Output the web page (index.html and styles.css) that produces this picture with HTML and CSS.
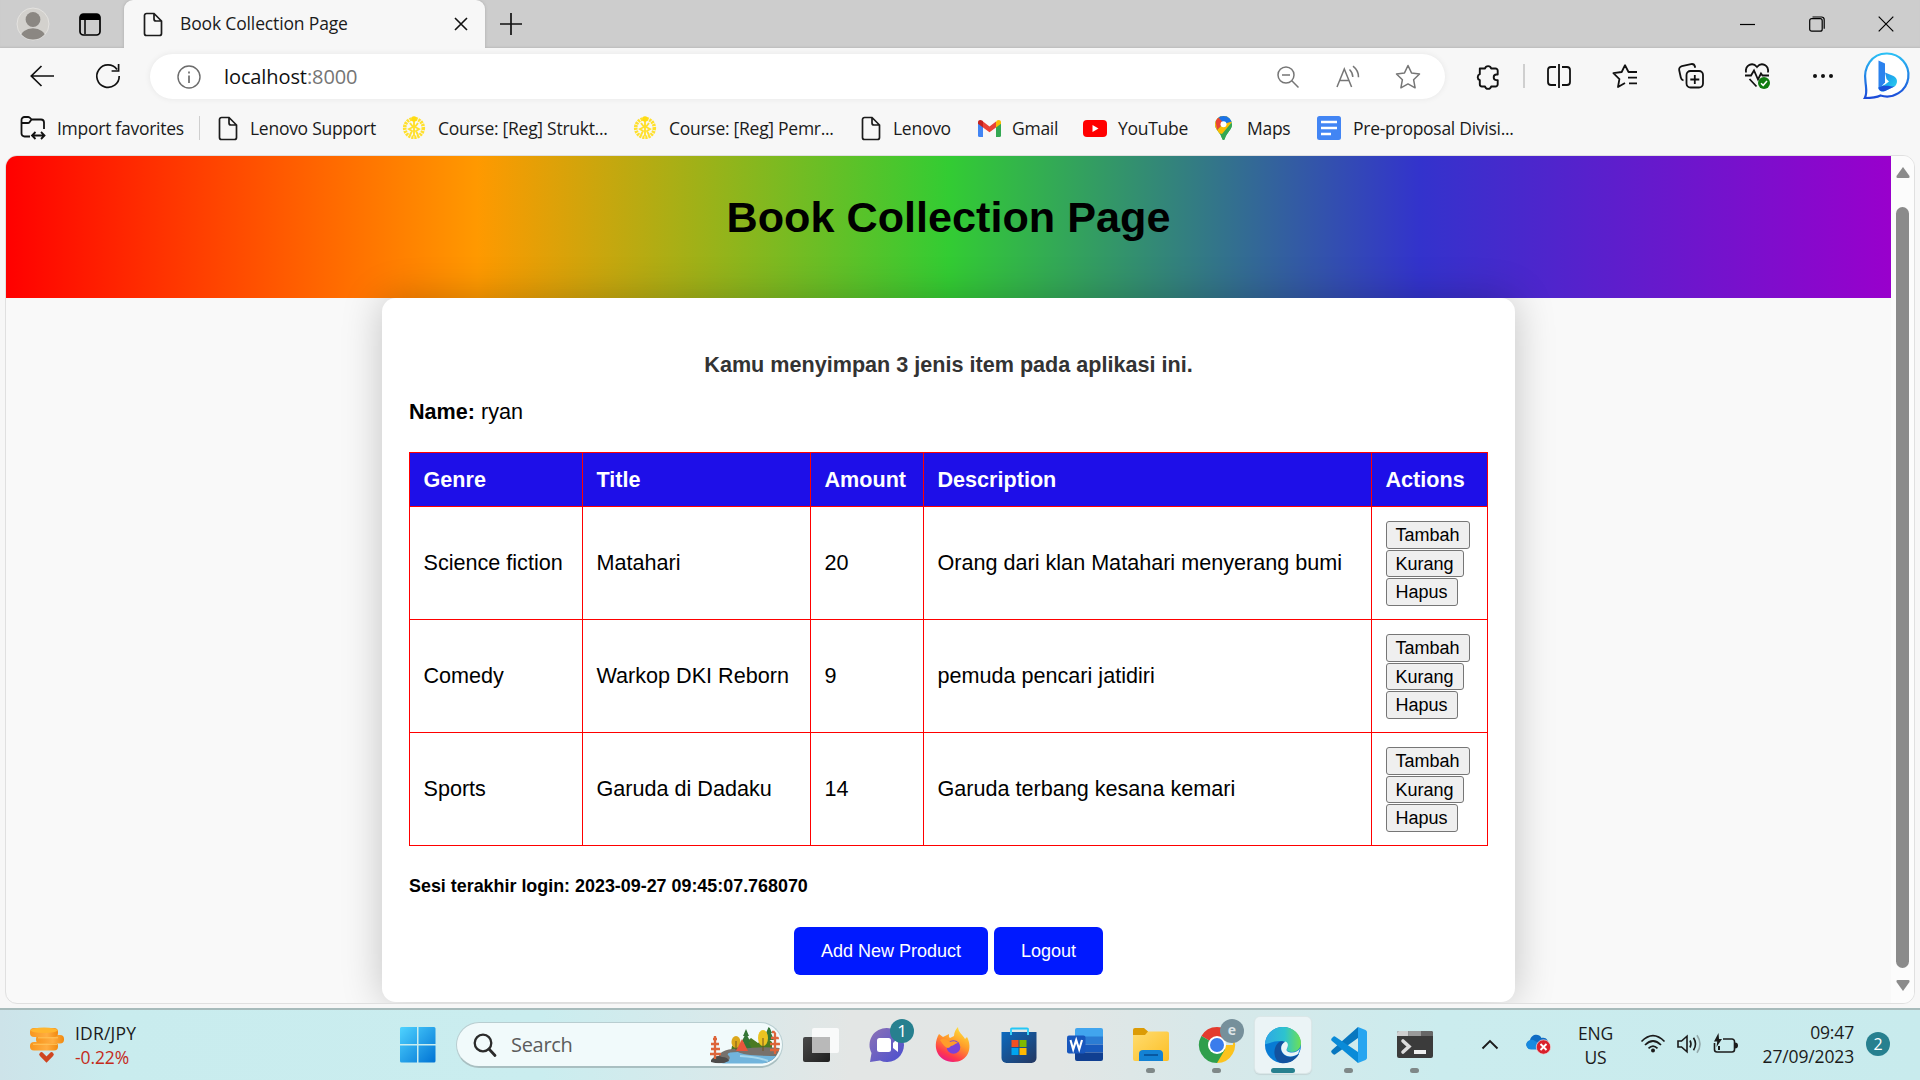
FILE: index.html
```html
<!DOCTYPE html>
<html lang="en">
<head>
<meta charset="utf-8">
<title>Book Collection Page</title>
<link rel="stylesheet" href="styles.css">
</head>
<body>
<svg class="defs" width="0" height="0" aria-hidden="true">
  <defs>
    <symbol id="file" viewBox="0 0 20 24"><path d="M3.5 1H11l7.5 7.5V21a2 2 0 0 1-2 2h-13a2 2 0 0 1-2-2V3a2 2 0 0 1 2-2zM11 1v5.5a2 2 0 0 0 2 2h5.5" fill="none" stroke="currentColor" stroke-width="1.7"/></symbol>
    <symbol id="crest" viewBox="0 0 24 24"><g fill="none" stroke="#ffe02e"><circle cx="12" cy="12" r="9.3" stroke-width="3.6" stroke-dasharray="2.2 .8"/><path d="M12 4v16M8 7l3 4-4 2 3 2-2 4M16 7l-3 4 4 2-3 2 2 4" stroke-width="1.9"/></g><circle cx="12" cy="3" r="2.8" fill="#ffdc12"/></symbol>
    <linearGradient id="winG" x1="0" y1="0" x2="1" y2="1"><stop offset="0" stop-color="#4fd3ff"/><stop offset="1" stop-color="#0073d4"/></linearGradient>
    <linearGradient id="bingG" x1="0" y1="0" x2="0" y2="1"><stop offset="0" stop-color="#2bc0f5"/><stop offset="1" stop-color="#1b4ad8"/></linearGradient>
    <linearGradient id="bG" x1="0" y1="0" x2="1" y2="1"><stop offset="0" stop-color="#2a7bea"/><stop offset=".6" stop-color="#1fb6ee"/><stop offset="1" stop-color="#35d5ec"/></linearGradient>
    <linearGradient id="coinG"><stop offset="0" stop-color="#f8961e"/><stop offset=".6" stop-color="#ffae42"/><stop offset="1" stop-color="#f28a10"/></linearGradient>
    <linearGradient id="chatG" x1="0" y1="0" x2="1" y2="1"><stop offset="0" stop-color="#8d72b5"/><stop offset="1" stop-color="#4a4fd0"/></linearGradient>
    <linearGradient id="foxG" x1=".8" y1="0" x2=".3" y2="1"><stop offset="0" stop-color="#ffe63b"/><stop offset=".45" stop-color="#ff9a2a"/><stop offset=".8" stop-color="#ff3a4c"/><stop offset="1" stop-color="#e8188b"/></linearGradient>
    <linearGradient id="storeG" x1="0" y1="0" x2="1" y2="1"><stop offset="0" stop-color="#0d6abf"/><stop offset="1" stop-color="#243760"/></linearGradient>
    <linearGradient id="folderG" x1="0" y1="0" x2="1" y2="1"><stop offset="0" stop-color="#ffdc70"/><stop offset="1" stop-color="#fcbf25"/></linearGradient>
    <linearGradient id="edgeG"><stop offset="0" stop-color="#2ea8e6"/><stop offset=".55" stop-color="#2dc3cf"/><stop offset="1" stop-color="#6ee053"/></linearGradient>
    <linearGradient id="darkG" x1="0" y1="0" x2="1" y2="1"><stop offset="0" stop-color="#4a4a4a"/><stop offset="1" stop-color="#1f1f1f"/></linearGradient>
  </defs>
</svg>

<div class="screen">
  <header class="tabstrip">
    <div class="slot profile">
      <svg width="34" height="34" viewBox="0 0 34 34"><clipPath id="av"><circle cx="17" cy="17" r="15.6"/></clipPath><circle cx="17" cy="17" r="16" fill="#d3d1cd" stroke="#e4e3e0"/><g clip-path="url(#av)" fill="#8b8782"><circle cx="17" cy="12.5" r="7.4"/><ellipse cx="17" cy="31" rx="12.5" ry="9.8"/></g></svg>
    </div>
    <div class="slot workspaces">
      <svg width="22" height="23" viewBox="0 0 22 23"><rect x="1" y="1" width="20" height="21" rx="3.5" fill="none" stroke="#000" stroke-width="1.7"/><path d="M1 7V4a3 3 0 0 1 3-3h14a3 3 0 0 1 3 3v3z" fill="#000"/><path d="M6 7v14" stroke="#000" stroke-width="1.5"/></svg>
    </div>
    <div class="tab">
      <svg width="20" height="25"><use href="#file"/></svg>
      <span class="tab-title">Book Collection Page</span>
      <svg class="tab-close" width="14" height="14" viewBox="0 0 14 14"><path d="M1 1l12 12M13 1L1 13" stroke="#111" stroke-width="1.6"/></svg>
    </div>
    <svg class="plus" width="22" height="22" viewBox="0 0 22 22"><path d="M11 0v22M0 11h22" stroke="#111" stroke-width="1.7"/></svg>
    <div class="window-buttons">
      <div class="slot"><svg width="15" height="15" viewBox="0 0 15 15"><path d="M0 7.5h15" stroke="#000" stroke-width="1.2"/></svg></div>
      <div class="slot"><svg width="16" height="16" viewBox="0 0 16 16" fill="none" stroke="#000" stroke-width="1.2"><rect x=".7" y="2.7" width="12.5" height="12.5" rx="2"/><path d="M3.5 1h9A2.6 2.6 0 0 1 15.2 3.7v9"/></svg></div>
      <div class="slot"><svg width="16" height="16" viewBox="0 0 16 16"><path d="M.7.7l14.6 14.6M15.3.7L.7 15.3" stroke="#000" stroke-width="1.2"/></svg></div>
    </div>
  </header>

  <nav class="toolbar">
    <div class="slot nav-slot"><svg width="25" height="22" viewBox="0 0 25 22" fill="none" stroke="#111" stroke-width="1.7"><path d="M24 11H1M11.5 1L1.3 11l10.2 10"/></svg></div>
    <div class="slot nav-slot"><svg width="26" height="26" viewBox="0 0 26 26" fill="none" stroke="#111" stroke-width="1.7"><path d="M22 6.5A11.2 11.2 0 1 0 24.2 13M23.6 1v7h-7"/></svg></div>
    <div class="address">
      <svg width="24" height="24" viewBox="0 0 24 24"><circle cx="12" cy="12" r="11" fill="none" stroke="#6c6c6c" stroke-width="1.4"/><path d="M12 10.4V18M12 6.4v2" stroke="#6c6c6c" stroke-width="1.7"/></svg>
      <span class="url">localhost<span class="port">:8000</span></span>
      <div class="address-tools">
        <div class="slot"><svg width="24" height="24" viewBox="0 0 24 24" fill="none" stroke="#767676" stroke-width="1.5"><circle cx="10" cy="10" r="8"/><path d="M6 10h8M15.8 15.8L22.5 22.5"/></svg></div>
        <div class="slot"><svg width="26" height="24" viewBox="0 0 26 24" fill="none" stroke="#767676" stroke-width="1.5"><path d="M2 22L9.3 4l7.3 18M4.6 15.5h9.4M14.5 4.5c2.3 2.2 3.2 4.5 3.3 7.5M18 1.2c3.8 3 5.6 6.500 5.500 11"/></svg></div>
        <div class="slot"><svg width="26" height="25" viewBox="0 0 26 25" fill="none" stroke="#767676" stroke-width="1.5" stroke-linejoin="round"><path d="M13 1.500l3.500 7.400 8 1.100-5.900 5.700 1.500 8.100L13 19.900l-7.100 3.900 1.500-8.100L1.500 10l8-1.100z"/></svg></div>
      </div>
    </div>
    <div class="slot tool"><svg width="24" height="25" viewBox="1 0 24 25" fill="none" stroke="#111" stroke-width="1.9" stroke-linejoin="round"><path d="M5 4.500h5a3.200 3.200 0 0 1 6.200 0h4.300a2.200 2.200 0 0 1 2.200 2.200v3.800h-1.200a2.800 2.800 0 0 0 0 5.600h1.200v4.200a2.200 2.200 0 0 1-2.200 2.200h-4.300a3.200 3.200 0 0 1-6.200 0H7a2.200 2.200 0 0 1-2.200-2.200v-4.100a3.200 3.200 0 0 1 0-6V4.500z"/></svg></div>
    <div class="divider"></div>
    <div class="slot tool"><svg width="24" height="24" viewBox="0 0 24 24" fill="none" stroke="#111" stroke-width="1.8"><path d="M9 3H4a3 3 0 0 0-3 3v12a3 3 0 0 0 3 3h5M15 3h5a3 3 0 0 1 3 3v12a3 3 0 0 1-3 3h-5M12 0v24"/></svg></div>
    <div class="slot tool"><svg width="26" height="24" viewBox="0 0 26 24" fill="none" stroke="#111" stroke-width="1.8" stroke-linejoin="round"><path d="M25 8h-8.500L13 1.200 9.700 8 1.400 9.200l6 5.900L6 23l7-4M16 13.700h9M17 19.400h8"/></svg></div>
    <div class="slot tool"><svg width="26" height="26" viewBox="0 0 26 26" fill="none" stroke="#111" stroke-width="1.8"><rect x="8.500" y="8" width="16.500" height="16.500" rx="4"/><path d="M16.800 12v9M12.300 16.500h9M5.500 17.500a4 4 0 0 1-2.700-3L1.200 7.300a3.500 3.500 0 0 1 2.700-4.200L13 1.100a3.500 3.500 0 0 1 4 2.700l.2 1"/></svg></div>
    <div class="slot tool"><svg width="27" height="26" viewBox="0 0 27 26" fill="none" stroke="#111" stroke-width="1.800"><path d="M2 9.500C1 2 8.500-1.500 13 4c4.500-5.500 12-2 11 5.500M1 12.500h6l3-5 4 9 3-6 1.500 2H25M5.500 16l7 7.500"/><circle cx="20" cy="20" r="6" fill="#107c10" stroke="none"/><path d="M17 20.200l2.200 2.100 3.800-4.300" stroke="#fff" stroke-width="1.500"/></svg></div>
    <div class="slot tool"><svg width="22" height="6" viewBox="0 0 22 6" fill="#111"><circle cx="3" cy="3" r="2"/><circle cx="11" cy="3" r="2"/><circle cx="19" cy="3" r="2"/></svg></div>
    <div class="slot bing"><svg width="46" height="48" viewBox="0 0 46 48"><path d="M23.500 1.500a21.500 21.500 0 1 1-6 42C12.500 46 7 46 1.800 46 4.500 41 3 36 2.500 30 0 15 9 1.500 23.500 1.500z" fill="#fff" stroke="url(#bingG)" stroke-width="2.200"/><path d="M15.500 8.500l6.500 3v19l-6.500 7z" fill="#2b82ee"/><path d="M22 20.500l8.500 3.500c4.500 2 4.500 8 1 10.500L22 39c-3 1.200-6.500.5-6.500-3.500l6.500-3 4-3-2.500-2.500z" fill="url(#bG)"/><path d="M15.500 35.500c.5 3.500 3.500 4.500 6.500 3.500l9.500-4.500c-3 .5-9-2.500-16 1z" fill="#1b4fd8"/></svg></div>
  </nav>

  <nav class="bookmarks">
    <div class="bm bm-import"><svg width="26" height="24" viewBox="0 0 26 24" fill="none" stroke="#111" stroke-width="1.800"><path d="M10 20.500H4.500a3 3 0 0 1-3-3V4a3 3 0 0 1 3-3h3.800c2 0 2.200 2.500 4.200 2.500H21a3 3 0 0 1 3 3V13M1.500 7h6.700c2 0 2-3.500 4-3.500M12 19.500h12.500M15.500 16l-3.500 3.500 3.500 3.500M21 16l3.500 3.500L21 23"/></svg><span>Import favorites</span></div>
    <div class="bm-divider"></div>
    <div class="bm bm-support"><svg width="20" height="25"><use href="#file"/></svg><span>Lenovo Support</span></div>
    <div class="bm bm-strukt"><svg width="24" height="24"><use href="#crest"/></svg><span>Course: [Reg] Strukt...</span></div>
    <div class="bm bm-pemr"><svg width="24" height="24"><use href="#crest"/></svg><span>Course: [Reg] Pemr...</span></div>
    <div class="bm bm-lenovo"><svg width="20" height="25"><use href="#file"/></svg><span>Lenovo</span></div>
    <div class="bm bm-gmail"><svg width="23" height="17" viewBox="0 0 23 17"><path d="M0 2.500V15.500A1.500 1.500 0 0 0 1.500 17H5V6z" fill="#4285f4"/><path d="M23 2.500V15.500a1.500 1.500 0 0 1-1.500 1.500H18V6z" fill="#34a853"/><path d="M18 2v5.500l5-3.800V2.300C23 0 20.500-.7 18.900.6z" fill="#fbbc04"/><path d="M5 1.500v6l6.500 4.800L18 7.500v-6l-6.500 5z" fill="#ea4335"/><path d="M0 2.300v1.400l5 3.800V1.300L4.100.6C2.400-.7 0 0 0 2.300z" fill="#c5221f"/></svg><span>Gmail</span></div>
    <div class="bm bm-youtube"><svg width="24" height="17" viewBox="0 0 24 17"><rect width="24" height="17" rx="4" fill="#f00"/><path d="M9.500 5v7l6-3.500z" fill="#fff"/></svg><span>YouTube</span></div>
    <div class="bm bm-maps"><svg width="17" height="24" viewBox="0 0 17 24"><clipPath id="pin"><path d="M8.500 0A8.400 8.400 0 0 1 17 8.500c0 5-5 7.500-7.300 14.500-.4 1.300-2 1.300-2.400 0C5 16 0 13.500 0 8.500A8.400 8.400 0 0 1 8.500 0z"/></clipPath><g clip-path="url(#pin)"><path d="M0 0h17v24H0z" fill="#34a853"/><path d="M0 16L15 0H0z" fill="#fbbc04"/><path d="M0 16L13 3l4 3-10 12z" fill="#fbbc04"/><path d="M17 7L6 20v5h11z" fill="#34a853"/><path d="M2 0h15v5.500L8.500 8z" fill="#1a73e8"/><path d="M0 2l3-1 5.500 6L2 14z" fill="#ea4335"/></g><circle cx="8.500" cy="8.300" r="3" fill="#fff"/></svg><span>Maps</span></div>
    <div class="bm bm-docs"><svg width="24" height="24" viewBox="0 0 24 24"><rect width="24" height="24" rx="2.500" fill="#4285f4"/><path d="M4 6h16M4 12h16M4 18h10" stroke="#fff" stroke-width="2.400"/></svg><span>Pre-proposal Divisi...</span></div>
  </nav>

  <div class="viewport">
    <main class="page">
      <div class="banner"><h1>Book Collection Page</h1></div>
      <section class="card">
        <h2 class="summary">Kamu menyimpan 3 jenis item pada aplikasi ini.</h2>
        <p class="name"><b>Name:</b> ryan</p>
        <table class="books">
          <colgroup><col class="c-genre"><col class="c-title"><col class="c-amount"><col class="c-desc"><col class="c-actions"></colgroup>
          <tr><th>Genre</th><th>Title</th><th>Amount</th><th>Description</th><th>Actions</th></tr>
          <tr><td>Science fiction</td><td>Matahari</td><td>20</td><td>Orang dari klan Matahari menyerang bumi</td><td><div class="actions"><button class="add">Tambah</button><button class="sub">Kurang</button><button class="del">Hapus</button></div></td></tr>
          <tr><td>Comedy</td><td>Warkop DKI Reborn</td><td>9</td><td>pemuda pencari jatidiri</td><td><div class="actions"><button class="add">Tambah</button><button class="sub">Kurang</button><button class="del">Hapus</button></div></td></tr>
          <tr><td>Sports</td><td>Garuda di Dadaku</td><td>14</td><td>Garuda terbang kesana kemari</td><td><div class="actions"><button class="add">Tambah</button><button class="sub">Kurang</button><button class="del">Hapus</button></div></td></tr>
        </table>
        <h5 class="session">Sesi terakhir login: 2023-09-27 09:45:07.768070</h5>
        <div class="links"><button class="primary new">Add New Product</button><button class="primary logout">Logout</button></div>
      </section>
    </main>
    <div class="scrollbar">
      <svg width="14" height="11" viewBox="0 0 14 11"><path d="M7 0l6.500 9q.5 2-1 2h-11q-1.500 0-1-2z" fill="#8b8b8b"/></svg>
      <div class="thumb"></div>
      <svg width="14" height="11" viewBox="0 0 14 11"><path d="M7 11L.5 2Q0 0 1.500 0h11q1.500 0 1 2z" fill="#8b8b8b"/></svg>
    </div>
  </div>

  <footer class="taskbar">
    <div class="widget">
      <svg width="35" height="36" viewBox="0 0 35 36"><g fill="url(#coinG)"><rect x="0" y="15" width="28" height="8.500" rx="4"/><rect x="6" y="8" width="28" height="8.500" rx="4"/><rect x="0" y="1" width="28" height="9" rx="4"/></g><g fill="#ffb52e"><ellipse cx="14" cy="3.300" rx="13.500" ry="2.700"/></g><path d="M8 10.800h20M3 17.300h24" stroke="#ffc65c" stroke-width="1"/><path d="M11.500 27.500l5 5 5-5" fill="none" stroke="#cf4520" stroke-width="4.500" stroke-linecap="round"/></svg>
      <div class="rate"><span class="pair">IDR/JPY</span><span class="change">-0.22%</span></div>
    </div>
    <svg class="start" width="36" height="36" viewBox="0 0 36 36"><path d="M0 1.500Q0 0 1.500 0H17v17H0zM18.500 0H34q1.500 0 1.500 1.500V17h-17zM0 18.500h17v17H1.500Q0 35.500 0 34zM18.500 18.500h17V34q0 1.500-1.500 1.500H18.500z" fill="url(#winG)"/></svg>
    <div class="search">
      <svg width="24" height="24" viewBox="0 0 24 24" fill="none" stroke="#2b2b2b"><circle cx="10" cy="10" r="8.300" stroke-width="2.300"/><path d="M16 16l6 6.500" stroke-width="2.800" stroke-linecap="round"/></svg>
      <span>Search</span>
      <svg class="scene" width="70" height="38" viewBox="0 0 70 38"><path d="M22 20l5-3 6 2 8-7 7 5 8-6 6 5v14H20z" fill="#4b7a22"/><path d="M12 26q8-4 18-3 22-3 40-1 0 10-6 15H6q2-8 6-11z" fill="#77716c"/><path d="M10 38q14-4 8-9-2-3 10-3 6 4 42 4-1 8-9 8z" fill="#71b4dc"/><path d="M30 30q18 1 28 5" stroke="#a5d7ee" stroke-width="2" fill="none"/><path d="M1 34q5-6 11-3 6 0 7 4-8 4-18 1z" fill="#4e4c4b"/><path d="M36 3l3 7h-1.500l3 6h-2l3 6h-11l3-6h-2l3-6H33zM59 0l3 7h-1l3 7h-10l3-7h-1z" fill="#337536"/><ellipse cx="26" cy="16" rx="4.500" ry="6" fill="#dca71b"/><ellipse cx="53" cy="12" rx="5" ry="8" fill="#ecc321"/><path d="M26 15v9M53 12v13" stroke="#72551e"/><path d="M32 13l6 12H26z" fill="#e7563c"/><path d="M5 10v23M0 28h11M1 23h9M1 18h8M3 13h4M65 2v26M60 24h10M60 18h10M61 12h8M62 6h6" stroke="#dd653b" stroke-width="2.300"/></svg>
    </div>
    <div class="apps">
      <div class="app"><svg width="36" height="36" viewBox="0 0 36 36"><rect x="0" y="10" width="27" height="25" rx="2" fill="url(#darkG)"/><rect x="9" y="1" width="27" height="25" rx="2" fill="#fff" fill-opacity=".8"/><path d="M9 10h18v16H9z" fill="#b9b9b9"/></svg></div>
      <div class="app"><svg width="36" height="36" viewBox="0 0 36 36"><path d="M18 1a17 17 0 1 1-7 32.500L1 35l1.500-9A17 17 0 0 1 18 1z" fill="url(#chatG)"/><rect x="8" y="11" width="14" height="14" rx="2.500" fill="#fff"/><path d="M24 16l5-5v14l-5-4z" fill="#fff"/></svg><span class="badge">1</span></div>
      <div class="app"><svg width="36" height="36" viewBox="0 0 36 36"><path d="M4 7l4 3 6-3c0 2-.5 3 1 4l4-2c0-4 2-7 4-9 0 5 5 8 7 12l2-2c6 11 1 25-14 25C4 35-4 21 4 7z" fill="url(#foxG)"/><circle cx="18.500" cy="20" r="6.800" fill="#7b42d8"/><path d="M5 13c4-3 8 0 10 2 2-1 6-1 8 1-3 0-4 3-7 3-3 4-6 2-11-6z" fill="#ff9c2b"/></svg></div>
      <div class="app"><svg width="36" height="36" viewBox="0 0 36 36"><path d="M10 7V2.500Q10 1.500 11 1.500h15q1 0 1 1V7" fill="none" stroke="#25c7f6" stroke-width="2"/><path d="M.500 5H35.500V31a5 5 0 0 1-5 5h-25a5 5 0 0 1-5-5z" fill="url(#storeG)"/><path d="M10 2v6M27 2v6" stroke="#38d0f8" stroke-width="2"/><path d="M10.500 13h7v7h-7z" fill="#f25022"/><path d="M18.500 13h7v7h-7z" fill="#7fba00"/><path d="M10.500 21h7v7h-7z" fill="#00a4ef"/><path d="M18.500 21h7v7h-7z" fill="#ffb900"/></svg></div>
      <div class="app"><svg width="36" height="34" viewBox="0 0 36 34"><path d="M8 2a2 2 0 0 1 2-2h24a2 2 0 0 1 2 2v7H8z" fill="#41a5ee"/><path d="M8 8.500h28v8H8z" fill="#2b7cd3"/><path d="M8 16.500h28v8H8z" fill="#185abd"/><path d="M8 24.500h28V31a2 2 0 0 1-2 2H10a2 2 0 0 1-2-2z" fill="#103f91"/><rect x="0" y="7.500" width="18.500" height="18" rx="2" fill="#1857bd"/><path d="M3.500 12l2.700 9.500L9.200 12l3 9.500L15 12" fill="none" stroke="#fff" stroke-width="2.100"/></svg></div>
      <div class="app"><svg width="36" height="34" viewBox="0 0 36 34"><path d="M0 2a2 2 0 0 1 2-2h9l4 3.500V8H0z" fill="#dc9b05"/><path d="M0 7h12l3-3.500h19a2 2 0 0 1 2 2V31a2 2 0 0 1-2 2H2a2 2 0 0 1-2-2z" fill="url(#folderG)"/><path d="M6 33v-7a4 4 0 0 1 4-4h16a4 4 0 0 1 4 4v7z" fill="#1382d4"/><path d="M11 27h14" stroke="#07549b" stroke-width="1.800"/></svg><i class="dot"></i></div>
      <div class="app"><svg width="36" height="36" viewBox="0 0 36 36"><path d="M18 18L2.400 9A18 18 0 0 1 33.600 9z" fill="#e33b2e"/><path d="M18 18h16L33.600 9A18 18 0 0 1 18 36z" fill="#fcc31e"/><path d="M2.400 9A18 18 0 0 0 18 36l8-13.500-8-4.500z" fill="#2f9f4c"/><path d="M18 9.500h15.800" stroke="#e33b2e" stroke-width="2"/><circle cx="18" cy="18" r="9" fill="#fff"/><circle cx="18" cy="18" r="7" fill="#3b7cec"/></svg><span class="badge user">e</span><i class="dot"></i></div>
      <div class="app active"><svg width="36" height="36" viewBox="0 0 36 36"><circle cx="18" cy="18" r="18" fill="#087bd4"/><path d="M0 17C1 6 9 0 18 0c11 0 18 8 18 16 0 6-5 9-9 9-3 0-6-1-5-3 2-4-1-8-7-8-7 0-12 3-15 3z" fill="url(#edgeG)"/><path d="M34 27c-4 7-11 10-18 9-7-2-9-14-3-20 2-2 5-2 7-1-6 3-5 11 1 14 4 2 9 1 12-2z" fill="#12529f"/><path d="M20.500 14.500c4 2 2 6 1.300 7.500-1 2 1.500 3.500 5.200 3.500 3.500 0 6-1.500 8-4l-2 5.500c-3 2-7 3-11 2-7-3-8-11-1.500-14.500z" fill="#eaf4f6"/></svg><i class="dot wide"></i></div>
      <div class="app"><svg width="36" height="36" viewBox="0 0 36 36"><path d="M27 0v11L4 27.500Q3 28 2 27L.5 25.500Q-.5 24 1 23z" fill="#0877bf"/><path d="M27 36V25L4 9.500Q3 9 2 10L.5 11.500Q-.500 13 1 14z" fill="#0a8bd8"/><path d="M27 0l7.500 3Q36 4 36 5v26q0 1-1.500 2L27 36z" fill="#27a5f0"/></svg><i class="dot"></i></div>
      <div class="app"><svg width="36" height="28" viewBox="0 0 36 28"><rect width="36" height="27" rx="2" fill="#3b3b3b"/><path d="M0 5V2a2 2 0 0 1 2-2h9.500v5z" fill="#cfcfcf"/><path d="M11.500 0H24v5H11.500z" fill="#9a9a9a"/><path d="M24 0h10a2 2 0 0 1 2 2v3H24z" fill="#676767"/><path d="M6 10l6 5.500L6 21" fill="none" stroke="#ddd" stroke-width="3.600" stroke-linecap="round"/><path d="M17 21h12" stroke="#eee" stroke-width="4"/></svg><i class="dot"></i></div>
    </div>
    <div class="tray">
      <div class="slot t-up"><svg width="18" height="11" viewBox="0 0 18 11"><path d="M1.500 9.500L9 2l7.500 7.500" fill="none" stroke="#1b1b1b" stroke-width="1.900"/></svg></div>
      <div class="slot t-cloud"><svg width="25" height="22" viewBox="0 0 25 22"><path d="M4 16C-1 15-1 8 4 7.500 5 1 13 0 15.500 5 20 3.500 23 8 22 11l-8 5z" fill="#0f6cc4"/><path d="M1 14C-1 8 6 5 9 8l9 5-4 3.500H5Q2 16.500 1 14z" fill="#168ae0"/><circle cx="17.500" cy="14" r="7.200" fill="#d9202b" stroke="#f1dfe1" stroke-width=".7"/><path d="M14.500 11l6 6m0-6l-6 6" stroke="#fff" stroke-width="1.900"/></svg></div>
      <div class="lang"><span>ENG</span><span>US</span></div>
      <div class="slot t-ic"><svg width="26" height="20" viewBox="0 0 26 20" fill="none" stroke="#1b1b1b" stroke-width="1.700"><path d="M1.500 7.500Q13-4 24.500 7.500M5 11Q13 3 21 11M8.500 14.300Q13 9.800 17.500 14.300"/><circle cx="13" cy="16.500" r="2" fill="#1b1b1b" stroke="none"/></svg></div>
      <div class="slot t-ic"><svg width="25" height="20" viewBox="0 0 25 20" fill="none" stroke="#1b1b1b" stroke-width="1.600"><path d="M1 7v6h3.500l5.500 4.800V2.200L4.500 7z"/><path d="M13 6.500q2 3.500 0 7M16.500 3.800q4 6.200 0 12.400"/><path d="M20 1.200q6 8.800 0 17.600" stroke="#93a9ab"/></svg></div>
      <div class="slot t-ic"><svg width="25" height="22" viewBox="0 0 25 22"><path d="M10 6h9a2.500 2.500 0 0 1 2.500 2.500v8A2.500 2.500 0 0 1 19 19H4a2.500 2.500 0 0 1-2.500-2.500V10" fill="none" stroke="#1b1b1b" stroke-width="1.600"/><path d="M22 9.500q3 0 3 3t-3 3z" fill="#1b1b1b"/><path d="M5.500 0L1 8.500h3.200L3.500 14 9 6H6z" fill="#1b1b1b"/><path d="M6 13v4" stroke="#1b1b1b" stroke-width="2"/></svg></div>
      <div class="clock"><span>09:47</span><span>27/09/2023</span></div>
      <span class="count">2</span>
    </div>
  </footer>
</div>
</body>
</html>
```
FILE: styles.css
```css
* { box-sizing: border-box; }
html, body { margin: 0; height: 100%; overflow: hidden; }
body { font-family: "Open Sans", "Noto Sans", sans-serif; color: #1b1b1b; background: #f7f7f7; }
svg { display: block; flex: none; overflow: visible; }
.defs { position: absolute; }
.screen { display: flex; flex-direction: column; width: 1920px; height: 1080px; }
.slot { display: flex; align-items: center; justify-content: center; flex: none; }

/* Tab strip */
.tabstrip { display: flex; align-items: center; height: 48px; background: #cdcdcd; box-shadow: inset 0 -2px 2px -1px #bcbcbc; }
.profile { width: 66px; }
.workspaces { width: 48px; }
.tab { display: flex; align-items: center; width: 361px; height: 48px; margin-left: 10px; padding: 0 17px 0 19px; background: #f7f7f7; border-radius: 9px 9px 0 0; box-shadow: 0 0 3px #aaa; clip-path: inset(0 -4px 0 -4px); }
.tab-title { margin-left: 17px; padding-bottom: 2px; font-size: 17.5px; letter-spacing: -.15px; white-space: nowrap; }
.tab-close { margin-left: auto; }
.plus { margin-left: 15px; }
.window-buttons { display: flex; margin-left: auto; }
.window-buttons .slot { width: 69px; }

/* Toolbar */
.toolbar { display: flex; align-items: center; height: 57px; padding: 0 0 1px 9px; }
.nav-slot { width: 66px; }
.address { display: flex; align-items: center; width: 1295px; height: 45px; margin: 1px 10px 0 9px; padding: 0 7px 0 27px; background: #fff; border-radius: 23px; box-shadow: 0 0 6px rgba(0, 0, 0, .07); }
.url { margin-left: 23px; padding-bottom: 1px; font-size: 20px; letter-spacing: -.1px; color: #111; }
.port { color: #757575; }
.address-tools { display: flex; margin-left: auto; }
.address-tools .slot { width: 60px; }
.tool { width: 66px; }
.divider { width: 2px; height: 24px; margin: 0 1px 0 2px; background: #cfcfcf; }
.bing { width: 60px; }

/* Favorites bar */
.bookmarks { display: flex; align-items: center; height: 50px; padding: 0 0 4px 20px; }
.bm { display: flex; align-items: center; font-size: 17.5px; letter-spacing: -.27px; white-space: nowrap; flex: none; }
.bm-import { width: 179px; gap: 11px; }
.bm-divider { width: 1px; height: 24px; margin-right: 18px; background: #cfcfcf; }
.bm-support { width: 184px; gap: 12px; }
.bm-strukt { width: 231px; gap: 12px; }
.bm-pemr { width: 228px; gap: 12px; }
.bm-lenovo { width: 117px; gap: 12px; }
.bm-gmail { width: 105px; gap: 11px; }
.bm-youtube { width: 132px; gap: 11px; }
.bm-maps { width: 102px; gap: 15px; }
.bm-docs { gap: 12px; }

/* Page area */
.viewport { display: flex; width: 1910px; height: 849px; margin: 0 5px; border: 1px solid #e0e0e0; border-radius: 12px; overflow: hidden; background: #f9f9f9; }
.page { width: 1885px; font-family: "Liberation Sans", Arial, sans-serif; font-size: 21.6px; color: #000; overflow: hidden; }
.banner { height: 142px; padding-top: 36px; background: linear-gradient(to right, #f00, #f90, #3c3, #33c, #90c); text-align: center; }
h1 { margin: 0; font-size: 43.2px; line-height: 50px; }
.card { width: 1133px; height: 704px; margin: 0 auto; padding: 54px 27px 0; background: #fff; border-radius: 14px; box-shadow: 0 0 40px rgba(0, 0, 0, .22); }
.summary { margin: 0; font-size: 21.6px; line-height: 25px; text-align: center; color: #333; }
.name { margin: 22px 0 28px; line-height: 25px; }
.books { width: 1078px; table-layout: fixed; border-collapse: collapse; }
.c-genre { width: 173px; }
.c-title { width: 228px; }
.c-amount { width: 113px; }
.c-desc { width: 448px; }
.c-actions { width: 116px; }
.books th, .books td { border: 1px solid #f00; padding: 0 0 0 13.5px; text-align: left; white-space: nowrap; }
.books th { height: 54px; background: #1e0fe8; color: #fff; }
.books td { height: 113px; }
.actions { display: flex; flex-direction: column; gap: 1px; padding-top: 1px; }
.actions button { height: 27.500px; padding: 0; border: 1px solid #767676; border-radius: 3px; background: #efefef; font: 18px/24px "Liberation Sans", Arial, sans-serif; color: #000; }
.add { width: 84px; }
.sub { width: 78px; }
.del { width: 72px; }
.session { margin: 30px 0; font-size: 17.900px; line-height: 21px; }
.links { display: flex; justify-content: center; gap: 6px; }
.primary { height: 48px; padding: 0; border: 0; border-radius: 6px; background: #0019ff; color: #fff; font: 18px "Liberation Sans", Arial, sans-serif; }
.new { width: 194px; }
.logout { width: 109px; }
.scrollbar { display: flex; flex-direction: column; align-items: center; justify-content: space-between; width: 23px; padding: 11px 0 12px; background: #fcfcfc; }
.thumb { width: 13px; height: 761px; margin-top: 16px; border-radius: 7px; background: #8b8b8b; }

/* Taskbar */
.taskbar { display: flex; align-items: center; height: 72px; margin-top: 4px; border-top: 2px solid #a7bbbb; background: linear-gradient(to right, #cde3e9 0, #c9ecee 110px, #caedef 540px, #d5eaec 680px, #e3e6e5 850px, #e2e6e5 1060px, #d8e8e9 1200px, #cbecee 1440px, #c8ebed 100%); }
.widget { display: flex; align-items: center; width: 400px; padding-left: 30px; gap: 10px; }
.rate { display: flex; flex-direction: column; padding-bottom: 1px; font-size: 17.5px; line-height: 24px; }
.pair { letter-spacing: .2px; }
.change { color: #c42b1c; letter-spacing: -.1px; }
.search { display: flex; align-items: center; width: 327px; height: 46px; margin-left: 20px; padding: 0 2px 0 16px; border: 1px solid #b8cdd0; border-bottom: 2px solid #a9bfc1; border-radius: 23px; background: #f1fafb; }
.search span { margin-left: 14px; font-size: 20px; letter-spacing: -.3px; color: #5c5c5c; }
.scene { margin-left: auto; clip-path: inset(0 0 0 0 round 0 20px 20px 0); }
.apps { display: flex; margin-left: 5px; }
.app { position: relative; display: flex; align-items: center; justify-content: center; width: 56px; height: 56px; margin: 0 5px; border-radius: 5px; }
.active { background: #ebf4f6; box-shadow: 0 0 0 1px #dbe7e8, 0 1px 1px 1px #c5d5d7; }
.dot { position: absolute; bottom: 0; left: 23px; width: 9px; height: 5px; border-radius: 3px; background: #7f8888; }
.dot.wide { left: 16px; width: 24px; background: #27808f; }
.badge { position: absolute; top: 2px; right: 1px; width: 24px; height: 24px; border-radius: 12px; background: #27808f; color: #fff; font-size: 17px; line-height: 24px; text-align: center; }
.badge.user { right: 1px; background: #76909b; font-size: 14px; font-weight: 700; line-height: 22px; color: #dde4e7; }
.tray { display: flex; align-items: center; margin-left: auto; padding: 0 30px 2px 0; }
.t-up { width: 40px; }
.t-cloud { width: 56px; }
.lang, .clock { display: flex; flex-direction: column; font-size: 17.5px; line-height: 24px; letter-spacing: -.15px; }
.lang { width: 59px; align-items: center; padding-top: 2px; }
.t-ic { width: 36px; margin-left: 0; }
.lang + .t-ic { margin-left: 10px; }
.clock { width: 111px; align-items: flex-end; }
.count { width: 24px; height: 24px; margin-left: 12px; border-radius: 12px; background: #27808f; color: #fff; font-size: 16px; line-height: 24px; text-align: center; }
```
